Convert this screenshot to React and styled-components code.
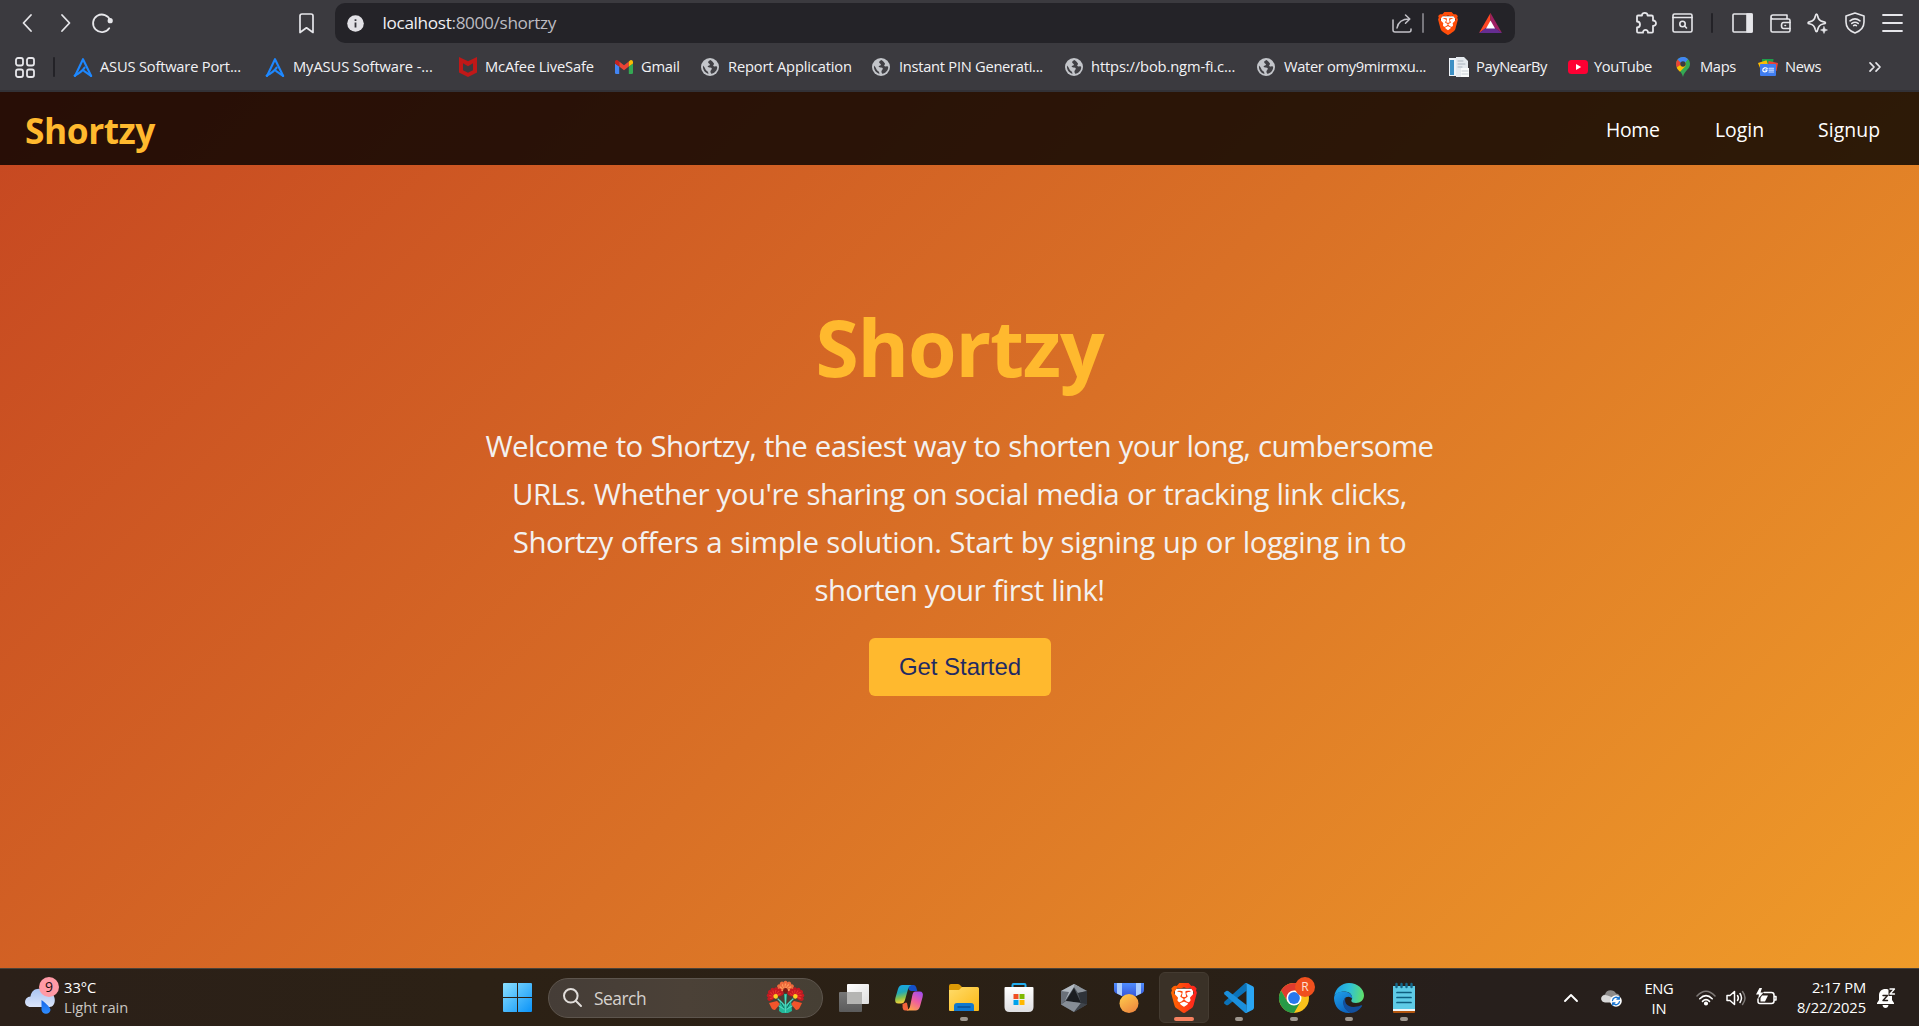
import React from "react";
import styled, { createGlobalStyle } from "styled-components";
import { SiBrave } from "react-icons/si";

const GlobalStyle = createGlobalStyle`
  *, *::before, *::after { box-sizing: border-box; }
  html, body, #root { height: 100%; }
  body {
    margin: 0;
    overflow: hidden;
    font-family: "Segoe UI", "Open Sans", sans-serif;
  }
`;

const Screen = styled.div`
  height: 1026px;
  display: flex;
  flex-direction: column;
`;

/* ---------- shared ---------- */

const Item = styled.span`
  display: flex;
  flex: none;
  align-items: center;
  margin-left: ${(p) => p.$gap || 0}px;
`;

const Icon = styled.svg.attrs((p) => ({ width: p.$w, height: p.$h || p.$w }))`
  display: block;
  flex: none;
  overflow: visible;
  fill: ${(p) => (p.$line ? "none" : "currentColor")};
  stroke: ${(p) => (p.$line ? "currentColor" : "none")};
  stroke-width: ${(p) => p.$line || 0};
  stroke-linecap: round;
  stroke-linejoin: round;
`;

const Label = styled.span`
  white-space: nowrap;
  font-size: ${(p) => p.$size || 14.7}px;
  line-height: 20px;
  letter-spacing: ${(p) => p.$track || 0}px;
`;

/* ---------- browser chrome ---------- */

const Chrome = styled.header`
  flex: none;
  height: 92px;
  background: #3b3a3f;
  border-bottom: 2px solid #333237;
  color: #e6e6ea;
`;

const Toolbar = styled.div`
  display: flex;
  align-items: center;
  height: 46px;
  padding-left: 22px;
`;

const AddressBar = styled.div`
  display: flex;
  align-items: center;
  flex: none;
  width: 1180px;
  height: 40px;
  margin-left: 21px;
  padding: 0 13px 0 12px;
  border-radius: 10px;
  background: #242328;
  color: #c3c2c8;
`;

const Url = styled(Label)`
  flex: 1;
  margin-left: 18.5px;
  color: #bcbbc1;
  b {
    font-weight: 400;
    color: #f0f0f4;
  }
`;

const Rule = styled.span`
  flex: none;
  width: ${(p) => p.$w || 2}px;
  height: 20px;
  margin-left: ${(p) => p.$gap}px;
  border-radius: 1px;
  background: ${(p) => p.$color || "#232227"};
`;

const Bookmarks = styled.nav`
  display: flex;
  align-items: center;
  height: 42px;
  padding-left: 15px;
`;

const Bookmark = styled.span`
  display: flex;
  flex: none;
  align-items: center;
  width: ${(p) => p.$w}px;
  color: #f2f2f5;
  ${Label} {
    padding-bottom: 2px;
  }
`;

const Favicon = styled.span`
  display: flex;
  flex: none;
  width: ${(p) => p.$w}px;
`;

/* ---------- page ---------- */

const Page = styled.main`
  flex: 1;
  min-height: 0;
  background: linear-gradient(135deg, #c64721 0%, #d97026 50%, #ef9b29 100%);
`;

const Navbar = styled.nav`
  display: flex;
  align-items: center;
  justify-content: space-between;
  height: 73px;
  padding: 0 38px 0 25px;
  background: rgba(0, 0, 0, 0.8);
`;

const Brand = styled.span`
  padding-top: 2px;
  color: #ffb92e;
  font-size: 35.3px;
  font-weight: 700;
  line-height: 48px;
  letter-spacing: -0.45px;
`;

const NavLinks = styled.div`
  display: flex;
  align-items: center;
  padding-top: 2px;
  color: #fff;
`;

const NavLink = styled.a`
  width: ${(p) => p.$w}px;
  font-size: 19.4px;
  line-height: 28px;
  letter-spacing: ${(p) => p.$track}px;
`;

const Hero = styled.section`
  display: flex;
  flex-direction: column;
  align-items: center;
  padding-top: 128px;
`;

const Title = styled.h1`
  margin: 0 0 22px;
  color: #ffb92e;
  font-size: 78.5px;
  font-weight: 700;
  line-height: 107px;
  letter-spacing: -1.16px;
`;

const Intro = styled.p`
  margin: 0 0 24px;
  color: #f3f1f0;
  font-size: 29.4px;
  line-height: 48px;
  text-align: center;
`;

const Line = styled.span`
  display: block;
  white-space: nowrap;
  letter-spacing: ${(p) => p.$track}px;
  word-spacing: ${(p) => p.$words || 0}px;
`;

const Cta = styled.button`
  width: 182px;
  height: 58px;
  padding: 0 0 0 1px;
  border: 0;
  border-radius: 6px;
  background: #ffb92e;
  color: #1f2a63;
  font-family: "Liberation Sans", Arial, sans-serif;
  font-size: 24px;
  letter-spacing: -0.05px;
`;

/* ---------- taskbar ---------- */

const Taskbar = styled.footer`
  display: flex;
  align-items: center;
  flex: none;
  height: 58px;
  border-top: 1px solid #4a4239;
  background: linear-gradient(90deg, #2b2019 0%, #2c2115 25%, #2a2016 62%, #271f1c 76%, #271f1b 100%);
  color: #fff;
`;

const Weather = styled.div`
  display: flex;
  align-items: center;
  width: 503px;
  padding-left: 25px;
`;

const Stack = styled.span`
  display: flex;
  flex-direction: column;
  align-items: ${(p) => p.$align || "flex-start"};
  width: ${(p) => (p.$w ? p.$w + "px" : "auto")};
  margin-left: ${(p) => p.$gap || 0}px;
  padding-bottom: ${(p) => p.$lift || 0}px;
`;

const Muted = styled(Label)`
  color: #c9c5c1;
`;

const SearchBox = styled.div`
  display: flex;
  align-items: center;
  flex: none;
  width: 275px;
  height: 40px;
  margin-left: 16px;
  padding: 0 18px 0 14px;
  border: 1px solid #5d554d;
  border-radius: 20px;
  background: linear-gradient(90deg, #453d37, #4b4137 50%, #463f34);
`;

const SearchText = styled(Label)`
  flex: 1;
  margin-left: 12px;
  color: #d6d2ce;
`;

const Apps = styled.div`
  display: flex;
  flex: none;
  margin-left: 3.5px;
`;

const AppSlot = styled.span`
  display: flex;
  flex-direction: column;
  align-items: center;
  width: 55px;
  height: 51px;
`;

const AppTile = styled.span`
  display: flex;
  flex-direction: column;
  align-items: center;
  justify-content: space-between;
  width: 50px;
  height: 51px;
  padding: 9px 0 1px;
  border: 1px solid ${(p) => (p.$active ? "#443b31" : "transparent")};
  border-radius: 6px;
  background: ${(p) => (p.$active ? "#3a3127" : "none")};
`;

const Glyph = styled.span`
  display: flex;
  align-items: center;
  height: 31px;
`;

const Indicator = styled.i`
  width: ${(p) => (p.$active ? 20 : 8)}px;
  height: 4px;
  border-radius: 2px;
  background: ${(p) => (p.$active ? "#f5815f" : p.$on ? "#9d968e" : "transparent")};
`;

const Tray = styled.div`
  display: flex;
  align-items: center;
  margin-left: auto;
  padding-right: 23px;
`;

/* ---------- drawings ---------- */

const Lion = ({ w, h, from = "#ff4d0a", to = "#ff4d0a", id }) => (
  <Icon $w={w} $h={h} viewBox="1.7 0 20.6 24" preserveAspectRatio="none">
    <defs>
      <linearGradient id={id}>
        <stop offset="0" stopColor={from} />
        <stop offset="1" stopColor={to} />
      </linearGradient>
    </defs>
    <path d="M5 4.5H19L19.5 12 15 19.5 12 21.5 9 19.5 4.5 12Z" fill="#fff" />
    <SiBrave size={24} fill={`url(#${id})`} />
  </Icon>
);

const Asus = () => (
  <Icon $w={20} viewBox="0 0 20 20" $line={2.1} color="#1e88ff">
    <path d="M2 19 10 2.2 18.2 19" />
    <path d="M1.6 18.6C6 16.4 9.5 13.8 11.6 10.6M11.2 14.2 18 18.8" />
  </Icon>
);

const McAfee = () => (
  <Icon $w={18} $h={20} viewBox="0 0 18 20">
    <path d="M0 0 9 4.2 18 0V15.5L9 20 0 15.5Z" fill="#c01818" />
    <path d="M4 6.2 9 9.2 14 6.2V13.2L9 15.8 4 13.2Z" fill="#3b3a3f" />
  </Icon>
);

const GmailMark = () => (
  <Icon $w={18} $h={14} viewBox="0 0 18 14">
    <path d="M0 3.5 4.2 6.5V14H1.2Q0 14 0 12.8Z" fill="#4285f4" />
    <path d="M18 3.5 13.8 6.5V14H16.8Q18 14 18 12.8Z" fill="#34a853" />
    <path d="M4.2 1.6 9 5.3 13.8 1.6V6.6L9 10.2 4.2 6.6Z" fill="#ea4335" />
    <path d="M0 2C0 0 2.3-.7 3.6.9L4.2 1.5V6.6L0 3.6Z" fill="#c5221f" />
    <path d="M18 2C18 0 15.7-.7 14.4.9L13.8 1.5V6.6L18 3.6Z" fill="#fbbc04" />
  </Icon>
);

const Globe = () => (
  <Icon $w={18} viewBox="0 0 18 18">
    <circle cx="9" cy="9" r="9" fill="#c3c5ca" />
    <path
      d="M9.6 1.9C7 2.6 6.4 4.5 8 5.4 9.6 6.2 9 7.4 7.4 7.8 5.8 8.3 7 9.6 9 9.6 11 9.7 11.3 11 10.2 12 9 13 9.4 14.6 10.2 15.8 14 15 16.2 12.4 16.2 9 16 8 15 8.2 14 8.4 12.3 8.6 11.6 7.4 12.8 6.4 13.6 5.6 12 4.7 11.6 3.8ZM2 7.6C1.5 11.5 3.7 14.8 7.4 15.9 7.4 14.4 6.8 13.6 5.6 12.8 4.2 11.9 4.6 10.2 2 7.6Z"
      fill="#414045"
    />
  </Icon>
);

const PayDoc = () => (
  <Icon $w={20} viewBox="0 0 20 20">
    <path d="M0 1H13V19H0Z" fill="#eef3f8" />
    <path d="M1 3H5V18H1Z" fill="#3c8fc4" />
    <path d="M7 0H15L19 4V20H7Z" fill="#e4e9ee" />
    <path d="M9 4H14M9 7H16M9 10H13" stroke="#a9b4be" strokeWidth="1" />
    <path d="M12 11H20V20H12Z" fill="#f8fafb" />
    <path d="M13 14H19M13 17H19" stroke="#c6cdd3" strokeWidth="1" />
  </Icon>
);

const YouTube = () => (
  <Icon $w={20} $h={14} viewBox="0 0 20 14">
    <rect width="20" height="14" rx="3.5" fill="#ff0033" />
    <path d="M8 4 13.2 7 8 10Z" fill="#fff" />
  </Icon>
);

const MapsPin = () => (
  <Icon $w={14} $h={20} viewBox="0 0 14 20">
    <path d="M7 0C3.1 0 0 3.1 0 7 0 12.4 5.6 13.6 7 20 8.4 13.6 14 12.4 14 7 14 3.1 10.9 0 7 0Z" fill="#34a853" />
    <path d="M1.6 2.5 7 7 0.9 10.6C-.6 7.8 0 4.4 1.6 2.5Z" fill="#ea4335" />
    <path d="M.7 10.4 9.6 4.2 9.6 9 4 14.8C2.6 13.2 1.3 12 .7 10.4Z" fill="#fbbc04" />
    <path d="M1.6 2.5C3.6-.3 9-1 12 2.2L7 8Z" fill="#4285f4" />
    <circle cx="7" cy="7" r="2.7" fill="#3b3a3f" />
  </Icon>
);

const NewsMark = () => (
  <Icon $w={20} $h={17} viewBox="0 0 20 17">
    <path d="M4 0H15.5L15 5H4Z" fill="#1e9e4a" />
    <path d="M0 4 8.5 1.2 10 6 2 9Z" fill="#fbbc04" />
    <path d="M10.5 2 20 4 18.5 12 10 9Z" fill="#ea4335" />
    <rect x="2" y="5" width="16" height="12" rx="1" fill="#3f7df0" />
    <path d="M9.2 9.5C8 8.2 4.8 8.6 4.8 11 4.8 13.4 9 13.6 9.1 11H7.3" fill="none" stroke="#fff" strokeWidth="1.2" />
    <path d="M11 9.2H15.6M11 11.1H15.6M11 13H15.6" stroke="#cfe0ff" strokeWidth="1.1" />
  </Icon>
);

const WeatherMark = () => (
  <Icon $w={34} $h={38} viewBox="0 0 34 38">
    <defs>
      <linearGradient id="cloud" x2="0" y2="1">
        <stop offset="0" stopColor="#a9c4f2" />
        <stop offset="1" stopColor="#dbe5fa" />
      </linearGradient>
      <linearGradient id="drop" x2="0" y2="1">
        <stop offset="0" stopColor="#1565e8" />
        <stop offset="1" stopColor="#2f8dff" />
      </linearGradient>
    </defs>
    <path d="M6 28C-2 28-1.500 18 5.500 17.500 6.500 8.500 18 7 20.500 15L24 14C31.500 14 32 28 24.500 28Z" fill="url(#cloud)" />
    <path d="M4 18.500C9 16.500 13 18 15 21" stroke="#8fafe6" fill="none" />
    <path d="M16.500 21C22 25.500 25.500 28.500 25.500 31A4.600 4.600 0 0 1 16.500 31Z" fill="url(#drop)" />
    <circle cx="24" cy="8" r="10" fill="#ff9aa6" />
    <text x="24" y="13" textAnchor="middle" fontSize="14" fill="#1c0d10" fontFamily="Open Sans">9</text>
  </Icon>
);

const StartMark = () => (
  <Icon $w={29} viewBox="0 0 29 29">
    <defs>
      <linearGradient id="win" x2="1" y2="1">
        <stop offset="0" stopColor="#8be0ff" />
        <stop offset="1" stopColor="#0a93f8" />
      </linearGradient>
    </defs>
    <path d="M0 1Q0 0 1 0H14V14H0ZM15 0H28Q29 0 29 1V14H15ZM0 15H14V29H1Q0 29 0 28ZM15 15H29V28Q29 29 28 29H15Z" fill="url(#win)" />
  </Icon>
);

const petals = [0, 30, 60, 90, 120, 150, 180];
const Flower = ({ x, y, r, turn = 0, outer, inner, core }) => (
  <g transform={`translate(${x} ${y}) rotate(${turn})`}>
    {petals.map((a) => (
      <g key={a} transform={`rotate(${a - 180})`}>
        <ellipse cx={r * 0.62} rx={r * 0.42} ry={r * 0.26} fill={outer} />
        <ellipse cx={r * 0.45} rx={r * 0.3} ry={r * 0.1} fill={inner} />
      </g>
    ))}
    <ellipse cy={r * 0.05} rx={r * 0.27} ry={r * 0.27} fill={core} />
  </g>
);

const Bouquet = () => (
  <Icon $w={37} $h={33} viewBox="0 0 37 33">
    <path d="M2 22 10 20 13 23 8 29Q5 29 4 26ZM35 22 27 20 24 23 29 29Q32 29 33 26Z" fill="#f2542b" />
    <path d="M12 30 13 19 18 24 17 13H20L19 24 24 19 25 30 21 32H15Z" fill="#23b99a" />
    <path d="M11 18 17 24M26 18 20 24M12 25 17 28M25 25 20 28M18.500 14V31" stroke="#4fd6bd" strokeWidth="1.200" />
    <path d="M14 22 17 27M23 22 20 27" stroke="#0f6e63" strokeWidth="1" />
    <Flower x={18.5} y={9} r={9} outer="#ee6a3c" inner="#ff9b5c" core="#7c1a12" />
    <Flower x={8.500} y={15} r={8.500} turn={-25} outer="#c41a22" inner="#e8352c" core="#ffd21f" />
    <Flower x={28.500} y={15} r={8.500} turn={25} outer="#c41a22" inner="#e8352c" core="#ffd21f" />
  </Icon>
);

const TaskView = () => (
  <Icon $w={30} $h={28} viewBox="0 0 30 28">
    <defs>
      <linearGradient id="tvf" x2="1" y2="1">
        <stop offset="0" stopColor="#ffffff" />
        <stop offset="1" stopColor="#dedede" />
      </linearGradient>
      <linearGradient id="tvb" x2="0" y2="1">
        <stop offset="0" stopColor="#777" />
        <stop offset="1" stopColor="#5b5b5b" />
      </linearGradient>
    </defs>
    <rect y="8" width="23" height="20" rx="1" fill="url(#tvb)" />
    <rect x="8" width="22" height="20" rx="1" fill="url(#tvf)" />
    <path d="M8 8H23V20H9Q8 20 8 19Z" fill="#b5b5b3" />
  </Icon>
);

const Copilot = () => (
  <Icon $w={28} $h={26} viewBox="0 0 28 26">
    <defs>
      <linearGradient id="cpl" x2="0.200" y2="1">
        <stop offset="0" stopColor="#16a6f0" />
        <stop offset="0.450" stopColor="#23a9b5" />
        <stop offset="0.750" stopColor="#8bc34a" />
        <stop offset="1" stopColor="#f5d13a" />
      </linearGradient>
      <linearGradient id="cpr" x1="0.800" x2="0.300" y2="1">
        <stop offset="0" stopColor="#a24df0" />
        <stop offset="0.500" stopColor="#ee5ea0" />
        <stop offset="1" stopColor="#ffa24a" />
      </linearGradient>
    </defs>
    <path d="M15 0H18.500Q20.500 0 21.200 2.200L22.300 6H16.500Q14 6 13.200 3Z" fill="#1450c8" />
    <path d="M7.500 0H16.500Q14 .5 13.200 3.500L10 15Q9 18.500 6 18.500H3.500Q-1 18.500 .4 13L3 4Q4.200 0 7.500 0Z" fill="url(#cpl)" />
    <path d="M7.500 19 9.800 18Q11 17 12 18L13.500 25.500H10Q8.200 25.500 7.600 23Z" fill="#f2633a" />
    <path d="M20 6.500H24.500Q29 6.500 27.600 12L25 21.500Q23.800 25.500 20.500 25.500H11.500Q14 25 14.900 22L17.500 9.500Q18.200 6.500 20 6.500Z" fill="url(#cpr)" />
  </Icon>
);

const Folder = () => (
  <Icon $w={30} $h={27} viewBox="0 0 30 27">
    <defs>
      <linearGradient id="fld" x2="1" y2="1">
        <stop offset="0" stopColor="#ffdc6b" />
        <stop offset="1" stopColor="#fcb814" />
      </linearGradient>
    </defs>
    <path d="M0 2Q0 0 2 0H9Q10.500 0 11.500 1.500L13 3V8H0Z" fill="#dd9a06" />
    <path d="M0 6H10L13 3H28.500Q30 3 30 4.500V26Q30 27 29 27H1Q0 27 0 26Z" fill="url(#fld)" />
    <path d="M5 27V22Q5 19 8 19H22Q25 19 25 22V27Z" fill="#1178cf" />
    <path d="M9 23H21" stroke="#0a4f96" strokeWidth="1.500" />
  </Icon>
);

const Store = () => (
  <Icon $w={30} $h={29} viewBox="-0.500 0 30 29">
    <defs>
      <linearGradient id="str" x2="0" y2="1">
        <stop offset="0" stopColor="#ffffff" />
        <stop offset="1" stopColor="#dfdfe2" />
      </linearGradient>
    </defs>
    <path d="M8 6V2Q8 1 9 1H20Q21 1 21 2V6" stroke="#22aef0" strokeWidth="2" fill="none" />
    <path d="M0 5Q0 4 1 4H28Q29 4 29 5V24Q29 29 24 29H5Q0 29 0 24Z" fill="url(#str)" />
    <path d="M9 11H14V16H9Z" fill="#f04e23" />
    <path d="M15 11H20V16H15Z" fill="#7fb900" />
    <path d="M9 17H14V22H9Z" fill="#00a2ec" />
    <path d="M15 17H20V22H15Z" fill="#ffb800" />
  </Icon>
);

const Crystal = () => (
  <Icon $w={26} $h={28} viewBox="0 0 26 28">
    <path d="M13 0 26 7V20.500L13 28 0 20.500V7Z" fill="#4d535b" />
    <path d="M13 0 19.500 3.500 13 3 4 17 0 7Z" fill="#b3bac2" />
    <path d="M13 0 26 7 17 9 13 3Z" fill="#8d949c" />
    <path d="M0 7 8 8 4 17 0 20.500Z" fill="#6a7079" />
    <path d="M13 4 20 19 5 17Z" fill="#1b1d21" />
    <path d="M5 17 20 19 13 28 0 20.500Z" fill="#868d96" />
    <path d="M20 19 26 20.500 13 28Z" fill="#3f444b" />
    <path d="M17 9 26 7V20.500L20 19Z" fill="#2f3339" />
  </Icon>
);

const Medal = () => (
  <Icon $w={30} $h={30} viewBox="0 0 30 30">
    <defs>
      <linearGradient id="mdl" x2="0.600" y2="1">
        <stop offset="0" stopColor="#ffcf4d" />
        <stop offset="1" stopColor="#ef8b3f" />
      </linearGradient>
      <linearGradient id="rib" x2="0" y2="1">
        <stop offset="0" stopColor="#4f8dff" />
        <stop offset="1" stopColor="#3454d8" />
      </linearGradient>
    </defs>
    <path d="M0 0H30V7Q30 9 28.500 10L20 14H10L1.500 10Q0 9 0 7Z" fill="url(#rib)" />
    <path d="M3 0H8V13L3 10.500ZM22 0H27V10.500L22 13Z" fill="#a9ccff" />
    <circle cx="15" cy="20.500" r="9.500" fill="url(#mdl)" />
  </Icon>
);

const Code = () => (
  <Icon $w={30} viewBox="0 0 100 100">
    <path d="M2 62 70 1Q73-1 76 1L75 26 14 73Q10 75 7 73L1 68Q-1 65 2 62Z" fill="#0b72b8" />
    <path d="M2 38Q-1 35 1 32L7 27Q10 25 14 27L75 73 76 99Q73 101 70 99Z" fill="#1b8fdc" />
    <path d="M70 1Q72-1 76 1L96 11Q100 13 100 18V82Q100 87 96 89L76 99Q72 101 70 99 75 101 75 95V5Q75 0 70 1Z" fill="#2aa6f4" />
  </Icon>
);

const ChromeMark = () => (
  <Icon $w={30} viewBox="0 0 30 30">
    <circle cx="15" cy="15" r="15" fill="#fbc21a" />
    <path d="M15 15 2 7.500A15 15 0 0 1 28 7.500H15Z" fill="#e03b2e" />
    <path d="M2 7.500 8.500 18.700 15 15 15 7.500Z" fill="#e03b2e" />
    <path d="M2 7.500 8.500 18.700 15 22 21.500 18.700 15 30A15 15 0 0 1 2 7.500Z" fill="#279a47" />
    <circle cx="15" cy="15" r="7.500" fill="#fff" />
    <circle cx="15" cy="15" r="5.900" fill="#2878ee" />
    <circle cx="26" cy="4" r="10" fill="#f0501e" />
    <text x="26" y="8.300" textAnchor="middle" fontSize="12" fill="#ffe0d2" fontFamily="Open Sans">R</text>
  </Icon>
);

const Edge = () => (
  <Icon $w={30} viewBox="0 0 30 30">
    <defs>
      <linearGradient id="edg" x1="0" y1="0.400" x2="1" y2="0.500">
        <stop offset="0" stopColor="#1a9be8" />
        <stop offset="0.500" stopColor="#2fc0d8" />
        <stop offset="1" stopColor="#5fe06a" />
      </linearGradient>
      <linearGradient id="edb" x2="0.500" y2="1">
        <stop offset="0" stopColor="#1fa0ea" />
        <stop offset="1" stopColor="#0d66c0" />
      </linearGradient>
    </defs>
    <path d="M.3 13C1.500 5.500 7.500 0 15 0 23.500 0 30 6 30 12.500 30 17 26.500 20 22 20 18.500 20 17 18.600 17.300 17.500 19 15.500 18.500 9 11 8.500 5.500 8.300 1.500 11 .3 13Z" fill="url(#edg)" />
    <path d="M0 15C.3 11 4.500 8.300 10 8.500 15.500 8.800 18.800 12 18.300 16 17.500 14 14.500 13 12 14.200 8 16.500 8.500 26 17 29.900 7 31.200 0 24 0 15Z" fill="url(#edb)" />
    <path d="M12 13.800C8.500 20 15 27 26.500 22.500 28.500 21.700 28.300 22.800 27.800 23.500 25 27.500 21 29.800 17 29.900 9.500 27.500 6.500 18.500 12 13.800Z" fill="#124f9c" />
  </Icon>
);

const Notepad = () => (
  <Icon $w={22} $h={30} viewBox="0 0 22 30">
    <path d="M0 26H22V29Q22 30 21 30H1Q0 30 0 29Z" fill="#b3560f" />
    <path d="M0 3H22V28H0Z" fill="#f2f5f6" />
    <path d="M0 3H22V26H0Z" fill="#5fcbe6" />
    <path d="M4 9.500H18M4 14.500H18M4 19.500H18" stroke="#0f5f80" strokeWidth="1.700" />
    <path d="M3.500 1V4M8.500 1V4M13.500 1V4M18.500 1V4" stroke="#14688a" strokeWidth="2.400" strokeLinecap="round" />
  </Icon>
);

const CloudSync = () => (
  <Icon $w={21} $h={18} viewBox="0 0 21 18">
    <path d="M4 13C-1 13-1 6 4 5.500 5 0 13 0 15 4.500 19 5 19.500 8 18 10L12 13Z" fill="#8d8b8a" />
    <path d="M4 13.500C-1 13-1 6.500 4 6 8 6 10 9 14 8.500V13.500Z" fill="#d9d9d9" />
    <circle cx="15" cy="12" r="5.800" fill="#fff" />
    <path d="M11.500 11.500A3.600 3.600 0 0 1 18 9.800M18.500 12.600A3.600 3.600 0 0 1 12 14.200M18.300 7.800V10.200H16M11.700 16.200V13.800H14" fill="none" stroke="#1472d0" strokeWidth="1.300" />
  </Icon>
);

const bookmarks = [
  { icon: <Asus />, pad: 27, w: 192, track: -0.2, text: "ASUS Software Port..." },
  { icon: <Asus />, pad: 28, w: 194, track: -0.09, text: "MyASUS Software -..." },
  { icon: <McAfee />, pad: 26, w: 156, track: -0.15, text: "McAfee LiveSafe" },
  { icon: <GmailMark />, pad: 26, w: 86, track: -0.25, text: "Gmail" },
  { icon: <Globe />, pad: 27, w: 171, track: -0.17, text: "Report Application" },
  { icon: <Globe />, pad: 27, w: 193, track: -0.28, text: "Instant PIN Generati..." },
  { icon: <Globe />, pad: 26, w: 192, track: -0.13, text: "https://bob.ngm-fi.c..." },
  { icon: <Globe />, pad: 27, w: 192, track: -0.34, text: "Water omy9mirmxu..." },
  { icon: <PayDoc />, pad: 27, w: 119, track: -0.4, text: "PayNearBy" },
  { icon: <YouTube />, pad: 26, w: 108, track: -0.34, text: "YouTube" },
  { icon: <MapsPin />, pad: 24, w: 82, track: -0.34, text: "Maps" },
  { icon: <NewsMark />, pad: 27, w: 111, track: -0.42, text: "News" },
];

const apps = [
  { icon: <TaskView /> },
  { icon: <Copilot /> },
  { icon: <Folder />, on: true },
  { icon: <Store /> },
  { icon: <Crystal /> },
  { icon: <Medal /> },
  { icon: <Lion w={26} h={30} from="#ff6a00" to="#ff1f1f" id="lionTask" />, active: true },
  { icon: <Code />, on: true },
  { icon: <ChromeMark />, on: true },
  { icon: <Edge />, on: true },
  { icon: <Notepad />, on: true },
];

const intro = [
  ["Welcome to Shortzy, the easiest way to shorten your long, cumbersome", -0.57, 0.6],
  ["URLs. Whether you're sharing on social media or tracking link clicks,", -0.52, 0.6],
  ["Shortzy offers a simple solution. Start by signing up or logging in to", -0.37, 0.6],
  ["shorten your first link!", -0.57, 0.6],
];

export default function App() {
  return (
    <Screen>
      <GlobalStyle />
      <Chrome>
        <Toolbar>
          <Item>
            <Icon $w={10} $h={18} viewBox="0 0 10 18" $line={1.8}>
              <path d="M9 1 1.500 9 9 17" />
            </Icon>
          </Item>
          <Item $gap={29}>
            <Icon $w={10} $h={18} viewBox="0 0 10 18" $line={1.8}>
              <path d="M1 1 8.500 9 1 17" />
            </Icon>
          </Item>
          <Item $gap={21}>
            <Icon $w={21} $h={20} viewBox="0 0 21 20" $line={1.8}>
              <path d="M17.200 15.200A8.800 8.800 0 1 1 18.200 7.500" />
              <circle cx="18.200" cy="7.700" r="1.700" fill="currentColor" />
            </Icon>
          </Item>
          <Item $gap={186}>
            <Icon $w={15} $h={21} viewBox="0 0 15 21" $line={1.7}>
              <path d="M1 3Q1 1 3 1H12Q14 1 14 3V19.500L7.500 14.800 1 19.500Z" />
            </Icon>
          </Item>
          <AddressBar>
            <Icon $w={17} viewBox="0 0 17 17">
              <circle cx="8.500" cy="8.500" r="8.300" fill="#e2e1e6" />
              <path d="M7.600 7.400H9.400V12.600H7.600ZM7.600 4.200H9.400V6H7.600Z" fill="#34333a" />
            </Icon>
            <Url $size={17.2} $track={-0.34}>
              <b>localhost</b>:8000/shortzy
            </Url>
            <Icon $w={20} $h={19} viewBox="0 0 20 19" $line={1.5}>
              <path d="M1 6V16Q1 18 3 18H17Q19 18 19 16V15" />
              <path d="M5 14C6 8 10 5 17.500 5M13.500 1 17.800 5 13.500 9.200" />
            </Icon>
            <Rule $w={1.5} $gap={10} $color="#77767c" />
            <Item $gap={14.5}>
              <Lion w={20} h={23} id="lionBar" />
            </Item>
            <Item $gap={21}>
              <Icon $w={23} $h={20} viewBox="0 0 23 20">
                <path d="M11.500 0 0 20 11.500 12Z" fill="#ff4724" />
                <path d="M11.500 0 23 20 11.500 12Z" fill="#9e1f63" />
                <path d="M0 20 11.500 11.500 23 20Z" fill="#662d91" />
                <path d="M11.500 7.500 16 15.500H7Z" fill="#fff" />
              </Icon>
            </Item>
          </AddressBar>
          <Item $gap={120}>
            <Icon $w={22} viewBox="0 0 22 22" $line={1.8}>
              <path d="M2 4.500Q2 3.500 3 3.500H7C6.500 0 13 0 12.500 3.500H16.500Q18 3.500 18 5V8.500C22 8.200 22 14.200 18 13.900V19.500Q18 20.700 17 20.700H13C13.300 17 7.700 17 8 20.700H3Q2 20.700 2 19.500V15.500C6 15.500 6 9.500 2 9.500Z" />
            </Icon>
          </Item>
          <Item $gap={15}>
            <Icon $w={21} $h={20} viewBox="0 0 21 20" $line={1.6}>
              <rect x="1" y="1" width="19" height="18" rx="1.500" />
              <path d="M1 4.500H20" />
              <circle cx="10.500" cy="11" r="2.700" />
              <path d="M12.600 13 14.500 15" />
            </Icon>
          </Item>
          <Rule $w={2} $gap={18} />
          <Item $gap={19}>
            <Icon $w={21} $h={20} viewBox="0 0 21 20" $line={1.6}>
              <rect x="1" y="1" width="19" height="18" rx="1" />
              <path d="M15 1H20V19H15Z" fill="currentColor" />
            </Icon>
          </Item>
          <Item $gap={17}>
            <Icon $w={21} $h={19} viewBox="0 0 21 19" $line={1.6}>
              <path d="M1 3V16.500Q1 18 2.500 18H18.500Q20 18 20 16.500V6.500Q20 5 18.500 5H3Q1 5 1 3 1 1 3 1H17V5" />
              <path d="M20 8.500H13.500Q11.500 8.500 11.500 11.500 11.500 14.500 13.500 14.500H20M15 11.500H15.500" />
            </Icon>
          </Item>
          <Item $gap={16}>
            <Icon $w={21} viewBox="0 0 21 21" $line={1.7}>
              <path d="M9.500 1Q10.300 1 10.800 3.500C11.500 7 12.800 8 16 8.700Q18.500 9.200 18.500 9.900 18.500 10.600 16 11C12.800 11.700 11.500 13 10.800 16.300Q10.300 18.700 9.500 18.700 8.800 18.700 8.200 16.300C7.500 13 6.300 11.700 3.200 11Q1 10.600 1 9.900 1 9.200 3.200 8.700C6.300 8 7.500 7 8.200 3.500Q8.800 1 9.500 1Z" />
              <circle cx="17" cy="17" r="4.200" fill="#3b3a3f" stroke="none" />
              <path d="M17 13.500 18 16 20.500 17 18 18 17 20.500 16 18 13.500 17 16 16Z" fill="currentColor" strokeWidth="0.500" />
            </Icon>
          </Item>
          <Item $gap={17}>
            <Icon $w={20} $h={22} viewBox="0 0 20 22" $line={1.6}>
              <path d="M10 1 19 4V10C19 15.500 15.500 19 10 21 4.500 19 1 15.500 1 10V4Z" />
              <path d="M5 8.800Q10 5 15 8.800M6.800 11.400Q10 9 13.200 11.400M8.600 13.600Q10 12.600 11.400 13.600" />
            </Icon>
          </Item>
          <Item $gap={17}>
            <Icon $w={21} $h={18} viewBox="0 0 21 18" $line={1.8}>
              <path d="M1 1H20M1 9H20M1 17H20" />
            </Icon>
          </Item>
        </Toolbar>
        <Bookmarks>
          <Item>
            <Icon $w={20} $h={21} viewBox="0 0 20 21" $line={1.8}>
              <rect x="1" y="1" width="7" height="7.500" rx="2" />
              <rect x="12" y="1" width="7" height="7.500" rx="2" />
              <rect x="1" y="12.500" width="7" height="7.500" rx="2" />
              <rect x="12" y="12.500" width="7" height="7.500" rx="2" />
            </Icon>
          </Item>
          <Rule $w={2} $gap={18} />
          <Item $gap={18}>
            {bookmarks.map((b) => (
              <Bookmark key={b.text} $w={b.w}>
                <Favicon $w={b.pad}>{b.icon}</Favicon>
                <Label $track={b.track}>{b.text}</Label>
              </Bookmark>
            ))}
          </Item>
          <Icon $w={12} $h={10} viewBox="0 0 12 10" $line={1.7}>
            <path d="M1 .8 5 5 1 9.200M7 .8 11 5 7 9.200" />
          </Icon>
        </Bookmarks>
      </Chrome>

      <Page>
        <Navbar>
          <Brand>Shortzy</Brand>
          <NavLinks>
            <NavLink $w={109} $track={-0.3}>Home</NavLink>
            <NavLink $w={103} $track={0}>Login</NavLink>
            <NavLink $w={63} $track={0.1}>Signup</NavLink>
          </NavLinks>
        </Navbar>
        <Hero>
          <Title>Shortzy</Title>
          <Intro>
            {intro.map(([text, track, words]) => (
              <Line key={text} $track={track} $words={words}>{text}</Line>
            ))}
          </Intro>
          <Cta>Get Started</Cta>
        </Hero>
      </Page>

      <Taskbar>
        <Weather>
          <WeatherMark />
          <Stack $gap={5} $lift={2}>
            <Label>33°C</Label>
            <Muted>Light rain</Muted>
          </Stack>
        </Weather>
        <StartMark />
        <SearchBox>
          <Icon $w={19} viewBox="0 0 19 19" $line={2} color="#e2dedb">
            <circle cx="7.800" cy="7.800" r="6.800" />
            <path d="M13 13 18 18" />
          </Icon>
          <SearchText $size={17.4} $track={-0.5}>Search</SearchText>
          <Bouquet />
        </SearchBox>
        <Apps>
          {apps.map((a, i) => (
            <AppSlot key={i}>
              <AppTile $active={a.active}>
                <Glyph>{a.icon}</Glyph>
                <Indicator $on={a.on} $active={a.active} />
              </AppTile>
            </AppSlot>
          ))}
        </Apps>
        <Tray>
          <Icon $w={14} $h={8} viewBox="0 0 14 8" $line={1.9}>
            <path d="M1 7 7 1 13 7" />
          </Icon>
          <Item $gap={23}>
            <CloudSync />
          </Item>
          <Stack $gap={22} $w={30} $align="center">
            <Label $track={-0.3}>ENG</Label>
            <Label>IN</Label>
          </Stack>
          <Item $gap={22}>
            <Icon $w={20} $h={16} viewBox="0 0 20 16" $line={1.6}>
              <path d="M1 6Q10-3.500 19 6" opacity="0.400" />
              <path d="M3.800 8.800Q10 2.500 16.200 8.800M6.500 11.400Q10 8 13.500 11.400" />
              <circle cx="10" cy="13.500" r="1.300" fill="currentColor" />
            </Icon>
          </Item>
          <Item $gap={10}>
            <Icon $w={20} $h={16} viewBox="0 0 20 16" $line={1.5}>
              <path d="M1 5.500H4L8.500 1.500V14.500L4 10.500H1Z" />
              <path d="M11.500 5.500Q13.200 8 11.500 10.500M14 3.500Q17 8 14 12.500" />
              <path d="M16.500 1.500Q21.500 8 16.500 14.500" opacity="0.400" />
            </Icon>
          </Item>
          <Item $gap={10}>
            <Icon $w={21} $h={17} viewBox="0 0 21 17" $line={1.5}>
              <path d="M8 3.500H15.500Q18 3.500 18 6V12Q18 14.500 15.500 14.500H4Q2 14.500 2 12.500V10M18.200 7.500H20V11H18.200" />
              <path d="M6 6.500H12L9 12.500H4.500V9Z" fill="currentColor" stroke="none" />
              <path d="M3.500-1 0 5.500H3L2 10 7.500 3.500H4.500L6-1Z" fill="currentColor" stroke="none" />
            </Icon>
          </Item>
          <Stack $gap={17} $w={72} $align="flex-end" $lift={2}>
            <Label $track={-0.13}>2:17 PM</Label>
            <Label $track={-0.06}>8/22/2025</Label>
          </Stack>
          <Item $gap={11}>
            <Icon $w={19} $h={20} viewBox="0 0 19 20">
              <path d="M8.500 1C12.500 1 15 3.500 15 7.500V12L17 15V16H0V15L2 12V7.500C2 3.500 4.500 1 8.500 1ZM5.500 17H11.500Q11 20 8.500 20T5.500 17Z" fill="#fff" />
              <path d="M6 7.500H10.500L6 12.500H10.500" stroke="#271f1b" strokeWidth="1.400" fill="none" />
              <path d="M11.500 0H18.500V5.500L14.500 8H11.500Z" fill="#271f1b" />
              <path d="M13 1H17.500L13 6H17.500" stroke="#fff" strokeWidth="1.300" fill="none" />
            </Icon>
          </Item>
        </Tray>
      </Taskbar>
    </Screen>
  );
}
